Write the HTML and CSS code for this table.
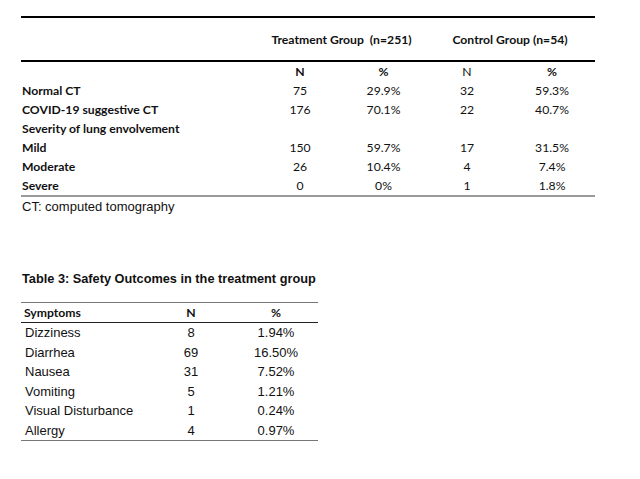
FILE: index.html
```html
<!DOCTYPE html>
<html>
<head>
<meta charset="utf-8">
<link rel="stylesheet" href="styles.css">
</head>
<body>
<div class="page">
  <table class="t1">
    <colgroup>
      <col class="c-label"><col class="c-n"><col class="c-p"><col class="c-n2"><col class="c-p2">
    </colgroup>
    <thead>
      <tr class="group">
        <th></th>
        <th colspan="2">Treatment Group&nbsp; (n=251)</th>
        <th colspan="2">Control Group (n=54)</th>
      </tr>
    </thead>
    <tbody>
      <tr class="sub"><td></td><td class="b">N</td><td class="b">%</td><td>N</td><td class="b">%</td></tr>
      <tr><td class="lbl">Normal CT</td><td>75</td><td>29.9%</td><td>32</td><td>59.3%</td></tr>
      <tr><td class="lbl">COVID-19 suggestive CT</td><td>176</td><td>70.1%</td><td>22</td><td>40.7%</td></tr>
      <tr><td class="lbl">Severity of lung envolvement</td><td></td><td></td><td></td><td></td></tr>
      <tr><td class="lbl">Mild</td><td>150</td><td>59.7%</td><td>17</td><td>31.5%</td></tr>
      <tr><td class="lbl">Moderate</td><td>26</td><td>10.4%</td><td>4</td><td>7.4%</td></tr>
      <tr class="last"><td class="lbl">Severe</td><td>0</td><td>0%</td><td>1</td><td>1.8%</td></tr>
    </tbody>
  </table>
  <p class="note">CT: computed tomography</p>

  <h2 class="title">Table 3: Safety Outcomes in the treatment group</h2>

  <table class="t2">
    <colgroup>
      <col class="d-label"><col class="d-n"><col class="d-p">
    </colgroup>
    <thead>
      <tr><th class="lbl">Symptoms</th><th>N</th><th>%</th></tr>
    </thead>
    <tbody>
      <tr><td class="lbl">Dizziness</td><td>8</td><td>1.94%</td></tr>
      <tr><td class="lbl">Diarrhea</td><td>69</td><td>16.50%</td></tr>
      <tr><td class="lbl">Nausea</td><td>31</td><td>7.52%</td></tr>
      <tr><td class="lbl">Vomiting</td><td>5</td><td>1.21%</td></tr>
      <tr><td class="lbl">Visual Disturbance</td><td>1</td><td>0.24%</td></tr>
      <tr class="last"><td class="lbl">Allergy</td><td>4</td><td>0.97%</td></tr>
    </tbody>
  </table>
</div>
</body>
</html>
```

FILE: styles.css
```css
html, body {
  margin: 0;
  padding: 0;
  background: #ffffff;
  color: #111111;
}

.page {
  padding: 16px 0 0 21px;
}

table {
  border-collapse: collapse;
  border-spacing: 0;
}

/* ---------- Table 1 ---------- */
.t1 {
  width: 574px;
  table-layout: fixed;
  font-family: Lato, "Open Sans", sans-serif;
  font-size: 12.2px;
  border-top: 2px solid #000;
}
.t1 .c-label { width: 237px; }
.t1 .c-n { width: 84px; }
.t1 .c-p { width: 83px; }
.t1 .c-n2 { width: 84px; }
.t1 .c-p2 { width: 86px; }

.t1 th, .t1 td {
  padding: 0;
  text-align: center;
  height: 19px;
  line-height: 19px;
  white-space: nowrap;
}
.t1 .group th {
  height: 42px;
  font-weight: bold;
  border-bottom: 2px solid #000;
  vertical-align: middle;
}
.t1 .b { font-weight: bold; }
.t1 .lbl {
  text-align: left;
  font-weight: bold;
  padding-left: 1px;
}
.t1 .last td {
  border-bottom: 2px solid #9a9a9a;
}

.note {
  margin: 2px 0 0 1px;
  font-family: "Liberation Sans", Arial, sans-serif;
  font-size: 13px;
  line-height: 16px;
}

.title {
  margin: 56px 0 0 1px;
  font-family: "Liberation Sans", Arial, sans-serif;
  font-size: 12.75px;
  font-weight: bold;
  line-height: 16px;
}

/* ---------- Table 2 ---------- */
.t2 {
  margin-top: 15px;
  width: 297px;
  table-layout: fixed;
  font-family: "Liberation Sans", Arial, sans-serif;
  font-size: 13px;
  border-top: 1px solid #777;
}
.t2 .d-label { width: 127px; }
.t2 .d-n { width: 86px; }
.t2 .d-p { width: 84px; }

.t2 th, .t2 td {
  padding: 0;
  text-align: center;
  height: 19.5px;
  line-height: 19px;
  white-space: nowrap;
}
.t2 th {
  font-family: Lato, "Open Sans", sans-serif;
  font-size: 12.2px;
  font-weight: bold;
  height: 19px;
  border-bottom: 1.5px solid #222;
}
.t2 .lbl {
  text-align: left;
  padding-left: 4px;
}
.t2 th.lbl { padding-left: 3px; }
.t2 .last td {
  border-bottom: 1px solid #777;
}
```
